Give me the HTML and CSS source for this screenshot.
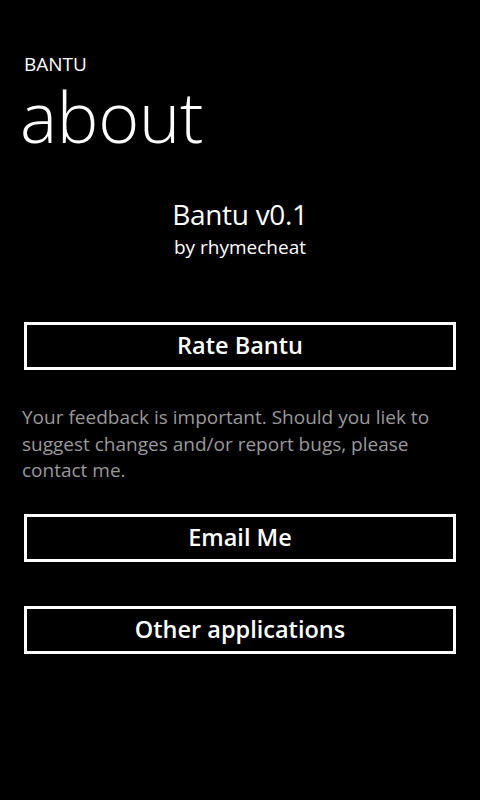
FILE: index.html
```html
<!DOCTYPE html>
<html>
<head>
<meta charset="utf-8">
<link rel="stylesheet" href="styles.css">
</head>
<body>
<div class="page">
  <div class="header">
    <div class="app-title">BANTU</div>
    <div class="page-title">about</div>
  </div>
  <div class="info">
    <div class="app-name">Bantu v0.1</div>
    <div class="byline">by rhymecheat</div>
  </div>
  <div class="content">
    <button class="btn btn-rate">Rate Bantu</button>
    <p class="note">Your feedback is important. Should you liek to suggest changes and/or report bugs, please contact me.</p>
    <button class="btn btn-email">Email Me</button>
    <button class="btn btn-other">Other applications</button>
  </div>
</div>
</body>
</html>
```
FILE: styles.css
```css
html, body {
  margin: 0;
  padding: 0;
  background: #000;
}
body {
  width: 480px;
  height: 800px;
  overflow: hidden;
  color: #fff;
  font-family: "Open Sans", "Noto Sans", sans-serif;
}
.page {
  display: flex;
  flex-direction: column;
}
.header {
  padding-top: 52px;
}
.app-title {
  padding-left: 24px;
  font-size: 19px;
  line-height: 24px;
  font-weight: 400;
}
.page-title {
  padding-left: 20px;
  margin-top: 4px;
  font-size: 70px;
  line-height: 72px;
  font-weight: 300;
  letter-spacing: -0.3px;
}
.info {
  margin-top: 44px;
  display: flex;
  flex-direction: column;
  align-items: center;
}
.app-name {
  font-size: 28px;
  line-height: 36px;
  letter-spacing: -0.3px;
}
.byline {
  margin-top: 2px;
  font-size: 19px;
  line-height: 26px;
}
.content {
  display: flex;
  flex-direction: column;
  padding: 0 24px;
  margin-top: 62px;
}
.btn {
  display: block;
  width: 432px;
  height: 48px;
  margin: 0;
  padding: 0 0 2px 0;
  border: 3px solid #fff;
  background: #000;
  color: #fff;
  font-family: "Open Sans", "Noto Sans", sans-serif;
  font-size: 23.5px;
  font-weight: 600;
  line-height: 40px;
  text-align: center;
  box-sizing: border-box;
}
.note {
  margin: 34px 0 0 -2px;
  font-size: 19px;
  line-height: 26.67px;
  color: #999;
}
.btn-email {
  margin-top: 30px;
}
.btn-other {
  margin-top: 44px;
}
```
